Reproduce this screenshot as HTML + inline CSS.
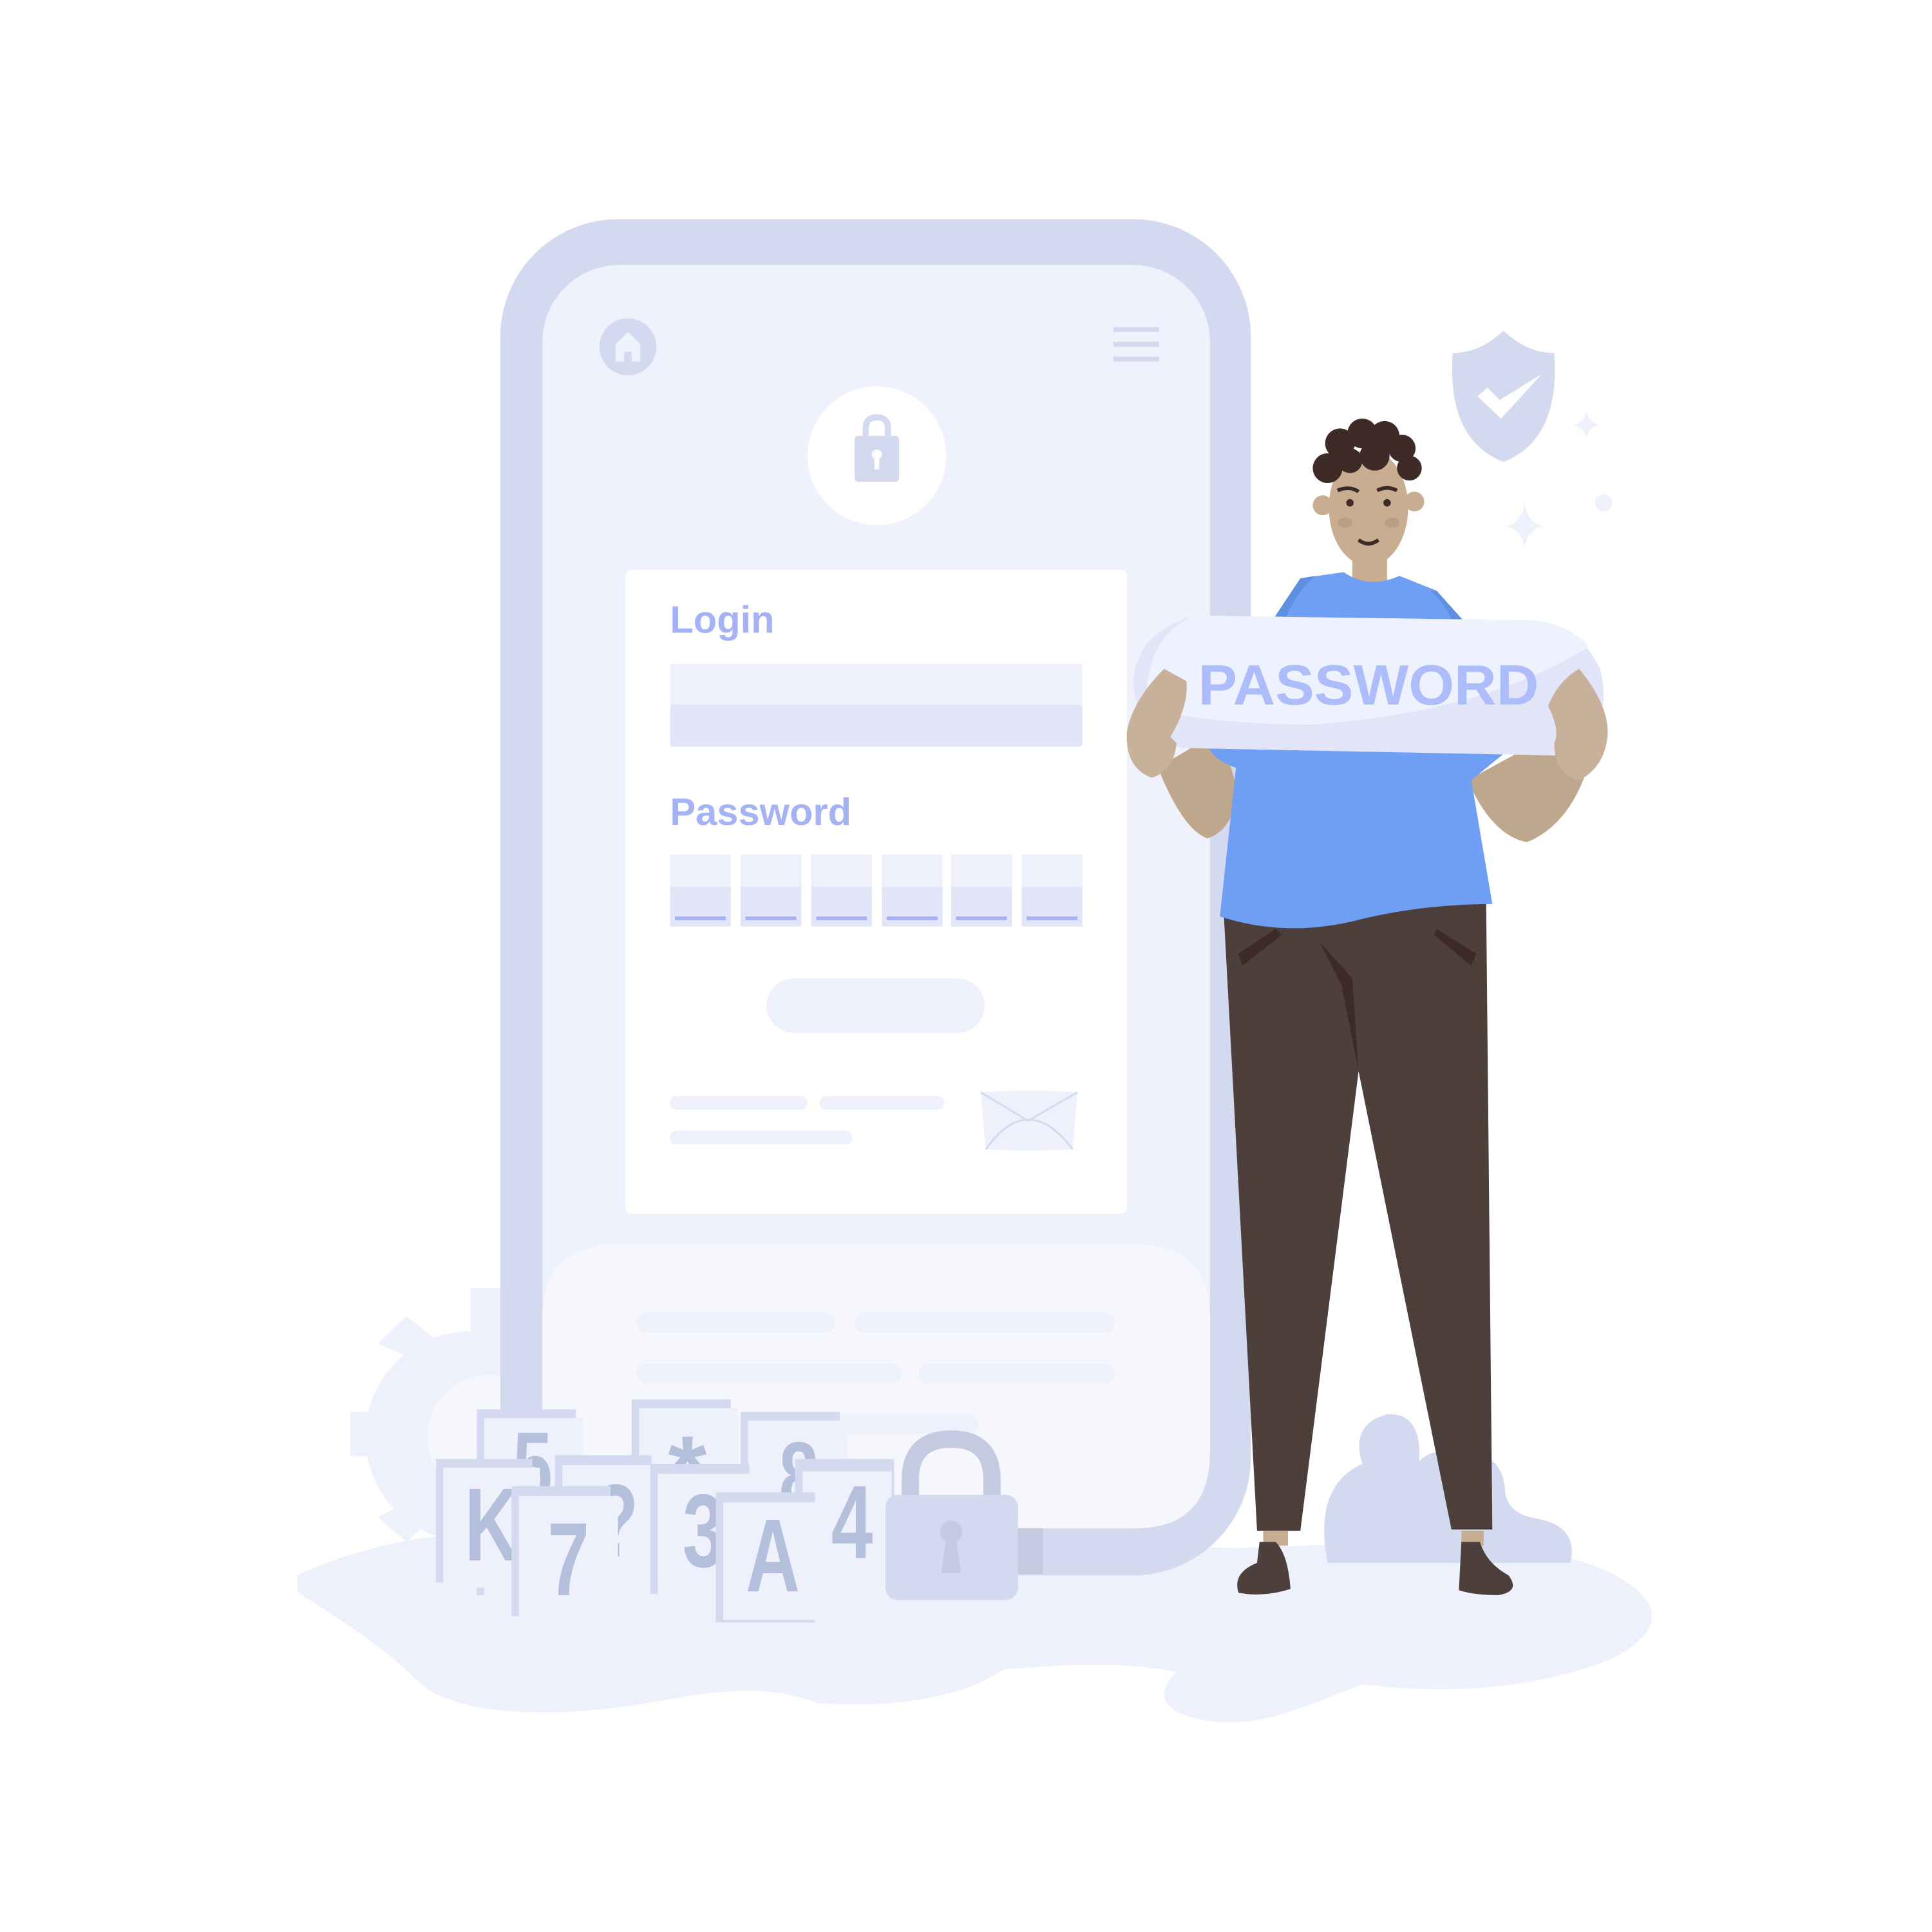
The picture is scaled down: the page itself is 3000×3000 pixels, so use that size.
<!DOCTYPE html>
<html><head><meta charset="utf-8"><style>
html,body{margin:0;padding:0;background:#fff;}
svg{display:block;}
text{font-family:"Liberation Sans",sans-serif;font-weight:bold;}
</style></head><body>
<svg width="3000" height="3000" viewBox="0 0 1560 1560" xmlns="http://www.w3.org/2000/svg">
<rect width="1560" height="1560" fill="#fff"/>
<path d="M240 1272 C300 1245 360 1235 420 1238 L1000 1250 C1120 1245 1240 1240 1300 1270 C1350 1295 1340 1320 1300 1340 C1250 1360 1180 1370 1100 1360 C1060 1375 1020 1395 980 1390 C940 1385 930 1370 950 1350 C900 1340 850 1345 810 1348 C780 1370 720 1380 660 1375 C620 1360 580 1365 540 1372 C450 1390 370 1385 340 1360 C300 1320 260 1300 240 1285 Z" fill="#eef0fb"/>
<g fill="#eef0fb">
<circle cx="380" cy="1160" r="85"/>
<rect x="283" y="1140" width="40" height="36"/>
<path d="M305 1085 L328 1063 L350 1080 L340 1100 Z"/>
<path d="M305 1225 L328 1245 L345 1230 L335 1210 Z"/>
<rect x="380" y="1040" width="30" height="40"/>
</g>
<circle cx="395" cy="1160" r="50" fill="#f6f7fd"/>
<rect x="404" y="177" width="606" height="1095" rx="95" fill="#d3d9ee"/>
<rect x="438" y="214" width="539" height="1020" rx="62" fill="#eff1fd"/>
<path d="M498 1005 L917 1005 Q977 1005 977 1065 L977 1172 Q977 1234 917 1234 L498 1234 Q438 1234 438 1172 L438 1065 Q438 1005 498 1005 Z" fill="#f6f7fd"/>
<g fill="#eef0fc">
<rect x="514" y="1060" width="160" height="16" rx="8"/><rect x="690" y="1060" width="210" height="16" rx="8"/>
<rect x="514" y="1101" width="214" height="16" rx="8"/><rect x="742" y="1101" width="158" height="16" rx="8"/>
<rect x="600" y="1142" width="190" height="16" rx="8"/>
</g>
<circle cx="507" cy="280" r="23" fill="#d3d9ee"/>
<path d="M497 292 L497 278 L507 268 L517 278 L517 292 L510 292 L510 284 L504 284 L504 292 Z" fill="#eff1fd"/>
<g stroke="#d3d9ee" stroke-width="4"><line x1="899" y1="266" x2="936" y2="266"/><line x1="899" y1="278" x2="936" y2="278"/><line x1="899" y1="290" x2="936" y2="290"/></g>
<circle cx="708" cy="368" r="56" fill="#fff"/>
<path d="M699 352 L699 346 Q699 337 708 337 Q717 337 717 346 L717 352" fill="none" stroke="#d3d9ee" stroke-width="5"/>
<rect x="690" y="352" width="36" height="37" rx="3" fill="#d3d9ee"/>
<circle cx="708" cy="367" r="4" fill="#fff"/><rect x="706" y="368" width="4" height="11" fill="#fff"/>
<rect x="505" y="460" width="405" height="520" rx="5" fill="#fff"/>
<text x="541" y="511" font-size="31" fill="#a5b3f5">Login</text>
<rect x="541" y="536" width="333" height="34" fill="#eef0fc"/>
<rect x="541" y="569" width="333" height="34" rx="3" fill="#e1e5f7"/>
<text x="541" y="666" font-size="31" fill="#a5b3f5">Password</text>
<g>
<g transform="translate(541 690)"><rect width="49" height="58" fill="#e1e5f7"/><rect width="49" height="26" fill="#eef0fc"/><rect x="4" y="50" width="41" height="3" fill="#a5b3f5"/></g>
<g transform="translate(598 690)"><rect width="49" height="58" fill="#e1e5f7"/><rect width="49" height="26" fill="#eef0fc"/><rect x="4" y="50" width="41" height="3" fill="#a5b3f5"/></g>
<g transform="translate(655 690)"><rect width="49" height="58" fill="#e1e5f7"/><rect width="49" height="26" fill="#eef0fc"/><rect x="4" y="50" width="41" height="3" fill="#a5b3f5"/></g>
<g transform="translate(712 690)"><rect width="49" height="58" fill="#e1e5f7"/><rect width="49" height="26" fill="#eef0fc"/><rect x="4" y="50" width="41" height="3" fill="#a5b3f5"/></g>
<g transform="translate(768 690)"><rect width="49" height="58" fill="#e1e5f7"/><rect width="49" height="26" fill="#eef0fc"/><rect x="4" y="50" width="41" height="3" fill="#a5b3f5"/></g>
<g transform="translate(825 690)"><rect width="49" height="58" fill="#e1e5f7"/><rect width="49" height="26" fill="#eef0fc"/><rect x="4" y="50" width="41" height="3" fill="#a5b3f5"/></g>
</g>
<rect x="619" y="790" width="176" height="44" rx="22" fill="#eef0fc"/>
<g fill="#eef0fc"><rect x="541" y="885" width="111" height="11" rx="5"/><rect x="662" y="885" width="100" height="11" rx="5"/><rect x="541" y="913" width="147" height="11" rx="5"/></g>
<path d="M792 882 Q830 879 870 882 L866 928 Q830 930 796 928 Z" fill="#eef0fc"/>
<path d="M792 882 L830 905 L870 882 M796 928 Q830 880 866 928" fill="none" stroke="#d3d9ee" stroke-width="1.5"/>
<path d="M1214 267 Q1195 285 1173 285 Q1168 355 1214 373 Q1260 355 1255 285 Q1233 285 1214 267 Z" fill="#d3d9ee"/>
<path d="M1193 320 L1201 313 L1211 323 L1245 302 L1212 338 Z" fill="#fff"/>
<path d="M1231 405 Q1233 422 1246 425 Q1233 428 1231 442 Q1229 428 1216 425 Q1229 422 1231 405 Z" fill="#eef0fb"/>
<path d="M1281 332 Q1282 340 1291 343 Q1282 346 1281 354 Q1280 346 1271 343 Q1280 340 1281 332 Z" fill="#eef0fb"/>
<circle cx="1295" cy="406" r="7" fill="#eef0fb"/>
<path d="M1072 1262 Q1060 1200 1100 1182 Q1090 1150 1120 1142 Q1148 1140 1146 1180 Q1160 1165 1185 1180 Q1210 1170 1215 1200 Q1215 1222 1240 1226 Q1275 1232 1268 1262 Z" fill="#d3d9ee"/>
<g>
<rect x="385" y="1138" width="80" height="150" fill="#d3d9ee"/><rect x="391" y="1145" width="80" height="145" fill="#eef0fc"/>
<rect x="510" y="1130" width="80" height="150" fill="#d3d9ee"/><rect x="516" y="1137" width="80" height="145" fill="#eef0fc"/>
<rect x="598" y="1140" width="80" height="150" fill="#d3d9ee"/><rect x="604" y="1147" width="80" height="145" fill="#eef0fc"/>
<text x="430" y="1212" font-size="80" fill="#b3bfdb" text-anchor="middle" transform="translate(430 0) scale(0.72 1) translate(-430 0)">5</text>
<text x="555" y="1215" font-size="80" fill="#b3bfdb" text-anchor="middle">*</text>
<text x="645" y="1220" font-size="80" fill="#b3bfdb" text-anchor="middle" transform="translate(645 0) scale(0.72 1) translate(-645 0)">8</text>
<rect x="352" y="1178" width="78" height="100" fill="#d3d9ee"/><rect x="358" y="1185" width="78" height="97" fill="#eef0fc"/>
<rect x="448" y="1175" width="78" height="100" fill="#d3d9ee"/><rect x="454" y="1183" width="78" height="97" fill="#eef0fc"/>
<rect x="525" y="1182" width="80" height="105" fill="#d3d9ee"/><rect x="531" y="1190" width="80" height="97" fill="#eef0fc"/>
<rect x="642" y="1178" width="80" height="102" fill="#d3d9ee"/><rect x="648" y="1188" width="72" height="95" fill="#eef0fc"/>
<text x="397" y="1260" font-size="84" fill="#b3bfdb" text-anchor="middle" transform="translate(397 0) scale(0.72 1) translate(-397 0)">K</text>
<text x="497" y="1257" font-size="84" fill="#b3bfdb" text-anchor="middle" transform="translate(497 0) scale(0.72 1) translate(-497 0)">?</text>
<text x="568" y="1265" font-size="84" fill="#b3bfdb" text-anchor="middle" transform="translate(568 0) scale(0.72 1) translate(-568 0)">3</text>
<text x="688" y="1258" font-size="84" fill="#b3bfdb" text-anchor="middle" transform="translate(688 0) scale(0.72 1) translate(-688 0)">4</text>
<rect x="413" y="1200" width="80" height="105" fill="#d3d9ee"/><rect x="419" y="1208" width="80" height="100" fill="#eef0fc"/>
<rect x="578" y="1205" width="80" height="105" fill="#d3d9ee"/><rect x="584" y="1213" width="80" height="95" fill="#eef0fc"/>
<text x="459" y="1288" font-size="84" fill="#b3bfdb" text-anchor="middle" transform="translate(459 0) scale(0.72 1) translate(-459 0)">7</text>
<text x="624" y="1285" font-size="84" fill="#b3bfdb" text-anchor="middle" transform="translate(624 0) scale(0.72 1) translate(-624 0)">A</text>
</g>
<rect x="822" y="1234" width="20" height="37" fill="#c4cbe0"/>
<path d="M735 1215 L735 1195 Q735 1162 768 1162 Q801 1162 801 1195 L801 1215" fill="none" stroke="#c4cbe0" stroke-width="14"/>
<rect x="715" y="1207" width="107" height="85" rx="10" fill="#d3d9ee"/>
<circle cx="768" cy="1237" r="9" fill="#c4cbe0"/><path d="M764 1242 L772 1242 L776 1270 L760 1270 Z" fill="#c4cbe0"/>
<path d="M988 735 L1200 728 L1205 1235 L1172 1235 L1097 865 L1050 1236 L1015 1236 Z" fill="#4d3f3c"/>
<path d="M1065 760 L1092 790 L1097 865 L1083 795 Z" fill="#3e2b28"/>
<path d="M1000 770 L1030 750 L1035 755 L1003 780 Z M1160 750 L1192 770 L1188 780 L1158 755 Z" fill="#3e2b28"/>
<rect x="1020" y="1236" width="20" height="12" fill="#c8ad90"/><rect x="1180" y="1236" width="18" height="12" fill="#c8ad90"/>
<path d="M1017 1245 L1030 1245 Q1040 1255 1042 1283 Q1020 1290 1000 1286 Q995 1270 1015 1262 Z" fill="#4d3f3c"/>
<path d="M1180 1245 L1195 1245 Q1200 1262 1218 1272 Q1228 1285 1210 1288 Q1190 1288 1178 1284 Z" fill="#4d3f3c"/>
<rect x="1092" y="440" width="28" height="35" fill="#c8ad90"/>
<ellipse cx="1105" cy="410" rx="32" ry="47" fill="#c8ad90"/>
<circle cx="1068" cy="408" r="8" fill="#c8ad90"/><circle cx="1142" cy="405" r="8" fill="#c8ad90"/>
<g fill="#3e2b28">
<circle cx="1072" cy="378" r="12"/><circle cx="1082" cy="358" r="12"/><circle cx="1100" cy="350" r="12"/><circle cx="1118" cy="352" r="12"/><circle cx="1132" cy="362" r="11"/><circle cx="1138" cy="378" r="10"/><circle cx="1110" cy="368" r="12"/><circle cx="1090" cy="372" r="10"/>
</g>
<circle cx="1090" cy="406" r="3" fill="#3e2b28"/><circle cx="1120" cy="406" r="3" fill="#3e2b28"/>
<path d="M1080 396 Q1090 392 1097 397 M1112 396 Q1120 392 1128 396" stroke="#3e2b28" stroke-width="3" fill="none"/>
<path d="M1097 436 Q1105 442 1113 436" stroke="#3e2b28" stroke-width="3" fill="none"/>
<ellipse cx="1086" cy="422" rx="6" ry="4" fill="#b99e84"/><ellipse cx="1124" cy="422" rx="6" ry="4" fill="#b99e84"/>
<path d="M935 620 Q955 670 975 677 Q995 670 1000 640 L985 590 Z" fill="#bea78c"/>
<path d="M1185 630 Q1205 675 1233 680 Q1270 665 1285 610 L1240 600 Z" fill="#bea78c"/>
<path d="M1050 467 L1085 462 Q1105 476 1130 465 L1160 477 L1185 505 L1225 600 Q1200 620 1188 630 L1205 730 Q1150 730 1100 742 Q1040 758 985 740 L998 620 Q970 610 975 590 L1030 497 Z" fill="#6f9ef5"/>
<path d="M1030 497 L1050 467 L1062 465 Q1045 480 1038 500 Z M1160 477 L1185 505 L1172 500 Q1165 485 1155 477 Z" fill="#5f8fe0"/>
<path d="M965 497 L1240 501 Q1275 505 1292 540 Q1300 570 1285 595 L1255 610 L955 604 Q918 595 915 550 Q918 510 965 497 Z" fill="#e1e5f7"/>
<path d="M965 497 L1240 501 Q1268 505 1283 522 Q1200 575 1060 585 Q980 585 925 572 Q925 512 965 497 Z" fill="#eef1fe"/>
<text x="1105" y="569" font-size="46" fill="#adbcfa" text-anchor="middle" textLength="275" lengthAdjust="spacingAndGlyphs">PASSWORD</text>
<path d="M940 540 Q915 565 910 590 Q908 620 930 628 Q948 622 950 600 L945 595 Q960 570 958 550 Z" fill="#c8b09a"/>
<path d="M1275 540 Q1300 570 1298 595 Q1295 620 1275 630 Q1255 625 1255 600 Q1260 590 1250 570 Q1258 550 1275 540 Z" fill="#c8b09a"/>
</svg>
</body></html>
